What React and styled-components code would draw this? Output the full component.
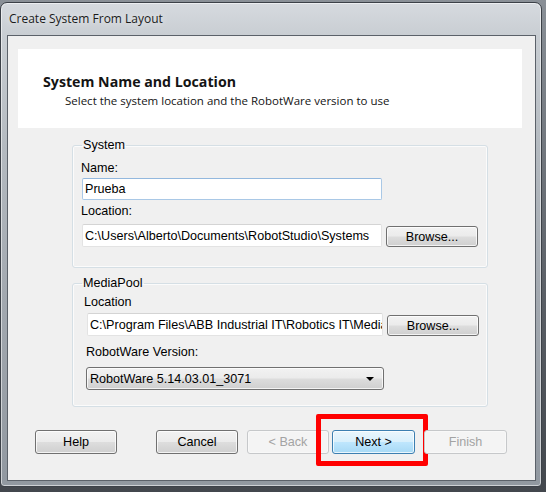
import React from "react";
import styled, { createGlobalStyle } from "styled-components";

const GlobalStyle = createGlobalStyle`
  html, body { margin: 0; padding: 0; }
  body {
    width: 546px;
    height: 492px;
    overflow: hidden;
    background: #4b5056;
  }
`;

const ui = `"Open Sans", "Noto Sans", sans-serif`;
const classic = `"Liberation Sans", Arial, sans-serif`;

const Desktop = styled.div`
  width: 546px;
  height: 492px;
  box-sizing: border-box;
  padding-top: 2px;
  background: linear-gradient(180deg, #8a9097 0%, #5a5f66 60%, #43474d 100%);
`;

const Frame = styled.div`
  width: 542px;
  height: 485px;
  box-sizing: border-box;
  border: 1px solid #3c4148;
  border-radius: 7px 7px 4px 4px;
  padding: 0 5px 5px 6px;
  display: flex;
  flex-direction: column;
  background: linear-gradient(180deg, #d6dadf 0%, #c8cdd2 7%, #b4bac0 30%, #a3a9b0 60%, #9198a0 100%);
  box-shadow: inset 0 0 0 1px rgba(255, 255, 255, 0.55);
`;

const TitleBar = styled.div`
  height: 32px;
  display: flex;
  align-items: center;
  padding-left: 2px;
  padding-bottom: 2px;
  box-sizing: border-box;
  font-family: ${ui};
  font-size: 12px;
  color: #1b1b1b;
  text-shadow: 0 0 6px rgba(255, 255, 255, 0.9);
`;

const Client = styled.div`
  flex: 1;
  border: 1px solid #5b6169;
  background: #f0f0f0;
  padding: 13px 13px 0 10px;
  display: flex;
  flex-direction: column;
`;

const Banner = styled.div`
  height: 79px;
  box-sizing: border-box;
  background: #ffffff;
  padding: 23px 0 0 25px;
  font-family: ${ui};
  color: #141414;
`;

const BannerTitle = styled.div`
  font-size: 14.2px;
  font-weight: 700;
  line-height: 20px;
`;

const BannerSub = styled.div`
  font-size: 11.5px;
  line-height: 16px;
  margin: 1px 0 0 22px;
`;

const Group = styled.fieldset`
  margin: ${(p) => p.$top}px 0 0 54px;
  width: 416px;
  box-sizing: border-box;
  border: 1px solid #d5dfe5;
  border-radius: 3px;
  box-shadow: inset 0 0 0 1px #fbfbfb;
  padding: ${(p) => p.$padTop}px 0 ${(p) => p.$padBottom}px ${(p) => p.$padLeft}px;
  font-family: ${classic};
  font-size: 12.6px;
  color: #000;
  min-inline-size: 0;
`;

const Legend = styled.legend`
  padding: 0 1px;
  margin-left: ${(p) => p.$shift}px;
  line-height: 14px;
  font-family: ${classic};
  font-size: 12.6px;
`;

const Label = styled.div`
  line-height: 14px;
  margin-top: ${(p) => p.$gap || 0}px;
  margin-left: ${(p) => p.$indent || 0}px;
`;

const Row = styled.div`
  display: flex;
  align-items: flex-end;
  gap: 4px;
  margin-top: ${(p) => p.$gap}px;
  margin-left: ${(p) => p.$indent || 0}px;
`;

const TextBox = styled.div`
  width: ${(p) => p.$w}px;
  height: ${(p) => p.$h}px;
  box-sizing: border-box;
  background: #fff;
  border: 1px solid ${(p) => (p.$focus ? "#a9c8e6" : "#e3e3e3")};
  border-top-color: ${(p) => (p.$focus ? "#93b8de" : "#d4d4d4")};
  border-radius: 2px;
  margin-top: ${(p) => p.$gap || 0}px;
  padding: 0 2px;
  display: flex;
  align-items: center;
  overflow: hidden;
  white-space: nowrap;
  font-family: ${classic};
  font-size: 12.6px;
  color: #000;
`;

const WinButton = styled.button`
  width: ${(p) => p.$w || 82}px;
  height: ${(p) => p.$h || 24}px;
  box-sizing: border-box;
  padding: 0;
  border-radius: 3px;
  font-family: ${classic};
  font-size: 12.6px;
  border: 1px solid ${(p) => (p.$default ? "#3c7fb1" : p.disabled ? "#c6c8ca" : "#707070")};
  color: ${(p) => (p.disabled ? "#a3a3a3" : "#000")};
  background: ${(p) =>
    p.$default
      ? "linear-gradient(180deg, #eaf6fd 0%, #d9f0fc 48%, #bee6fd 52%, #a7d9f5 100%)"
      : p.disabled
      ? "#f4f4f4"
      : "linear-gradient(180deg, #f2f2f2 0%, #ebebeb 48%, #dddddd 52%, #cfcfcf 100%)"};
  box-shadow: inset 0 0 0 1px ${(p) => (p.disabled ? "#f8f8f8" : "rgba(255,255,255,0.75)")};
`;

const Combo = styled.div`
  width: 298px;
  height: 23px;
  box-sizing: border-box;
  margin: 8px 0 0 2px;
  border: 1px solid #707070;
  border-radius: 3px;
  background: linear-gradient(180deg, #f2f2f2 0%, #ebebeb 48%, #dddddd 52%, #cfcfcf 100%);
  box-shadow: inset 0 0 0 1px rgba(255, 255, 255, 0.75);
  display: flex;
  align-items: center;
  justify-content: space-between;
  padding: 0 9px 0 3px;
  font-family: ${classic};
  font-size: 12.6px;
`;

const Arrow = styled.span`
  width: 0;
  height: 0;
  border-left: 4px solid transparent;
  border-right: 4px solid transparent;
  border-top: 4px solid #000;
`;

const ButtonBar = styled.div`
  display: flex;
  margin: 23px 0 0 17px;
`;

const Slot = styled.div`
  position: relative;
  margin-left: ${(p) => p.$gap || 0}px;
`;

const Highlight = styled.div`
  position: absolute;
  left: -16px;
  top: -16px;
  width: 112px;
  height: 52px;
  box-sizing: border-box;
  border: 5px solid #ff0000;
  border-radius: 2px;
  pointer-events: none;
`;

export default function App() {
  return (
    <Desktop>
      <GlobalStyle />
      <Frame>
        <TitleBar>Create System From Layout</TitleBar>
        <Client>
          <Banner>
            <BannerTitle>System Name and Location</BannerTitle>
            <BannerSub>Select the system location and the RobotWare version to use</BannerSub>
          </Banner>

          <Group $top={10} $padTop={9} $padBottom={20} $padLeft={9}>
            <Legend $shift={0}>System</Legend>
            <Label $indent={-1}>Name:</Label>
            <TextBox $w={300} $h={22} $gap={3} $focus>Prueba</TextBox>
            <Label $gap={4} $indent={-1}>Location:</Label>
            <Row $gap={6}>
              <TextBox $w={300} $h={23}>C:\Users\Alberto\Documents\RobotStudio\Systems</TextBox>
              <WinButton $w={92} $h={21}>Browse...</WinButton>
            </Row>
          </Group>

          <Group $top={8} $padTop={5} $padBottom={16} $padLeft={11}>
            <Legend $shift={-2}>MediaPool</Legend>
            <Label>Location</Label>
            <Row $gap={4} $indent={3}>
              <TextBox $w={296} $h={23}>C:\Program Files\ABB Industrial IT\Robotics IT\Media</TextBox>
              <WinButton $w={92} $h={21}>Browse...</WinButton>
            </Row>
            <Label $gap={9} $indent={2}>RobotWare Version:</Label>
            <Combo>
              <span>RobotWare 5.14.03.01_3071</span>
              <Arrow />
            </Combo>
          </Group>

          <ButtonBar>
            <Slot>
              <WinButton>Help</WinButton>
            </Slot>
            <Slot $gap={39}>
              <WinButton>Cancel</WinButton>
            </Slot>
            <Slot $gap={9}>
              <WinButton disabled>&lt; Back</WinButton>
            </Slot>
            <Slot $gap={3}>
              <WinButton $default $w={83}>Next &gt;</WinButton>
              <Highlight />
            </Slot>
            <Slot $gap={9}>
              <WinButton disabled $w={83}>Finish</WinButton>
            </Slot>
          </ButtonBar>
        </Client>
      </Frame>
    </Desktop>
  );
}
